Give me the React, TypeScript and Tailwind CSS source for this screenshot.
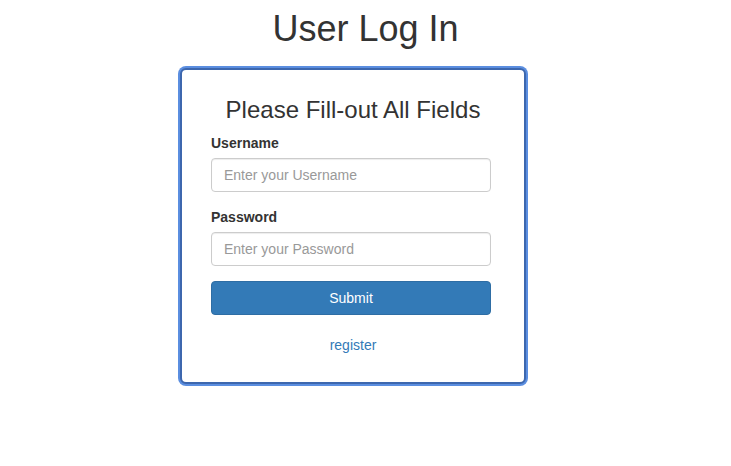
import React from "react";

export default function App() {
  return (
    <div className="min-h-[466px] w-full bg-white text-[#333333]" style={{ fontFamily: '"Liberation Sans", Arial, Helvetica, sans-serif' }}>
      <h1 className="pt-[9px] text-center text-[36px] leading-[40px] font-normal text-[#333333]">User Log In</h1>
      <div className="ml-[180px] mt-[19px] w-[346px] h-[316px] rounded-[6px] border-2 border-[#3d67ae] shadow-[0_0_0_2px_#5b8ee0] bg-white">
        <h3 className="mt-[27px] text-center text-[24px] leading-[26px] font-normal text-[#333333]">Please Fill-out All Fields</h3>
        <div className="pl-[29px] pr-[33px] mt-[10px]">
          <div>
            <label className="block text-[14px] leading-[20px] font-bold text-[#333333] mb-[5px]">Username</label>
            <input
              type="text"
              placeholder="Enter your Username"
              className="block w-[280px] h-[34px] rounded-[4px] border border-[#cccccc] px-[12px] text-[14px] text-[#555555] placeholder:text-[#999999] shadow-[inset_0_1px_1px_rgba(0,0,0,0.075)] outline-none"
            />
          </div>
          <div className="mt-[15px]">
            <label className="block text-[14px] leading-[20px] font-bold text-[#333333] mb-[5px]">Password</label>
            <input
              type="password"
              placeholder="Enter your Password"
              className="block w-[280px] h-[34px] rounded-[4px] border border-[#cccccc] px-[12px] text-[14px] text-[#555555] placeholder:text-[#999999] shadow-[inset_0_1px_1px_rgba(0,0,0,0.075)] outline-none"
            />
          </div>
          <button className="mt-[15px] block w-[280px] h-[34px] rounded-[4px] border border-[#2e6da4] bg-[#337ab7] text-[14px] text-white">
            Submit
          </button>
        </div>
        <div className="mt-[20px] text-center text-[14px] leading-[20px]">
          <a className="text-[#337ab7]" href="#">register</a>
        </div>
      </div>
    </div>
  );
}
